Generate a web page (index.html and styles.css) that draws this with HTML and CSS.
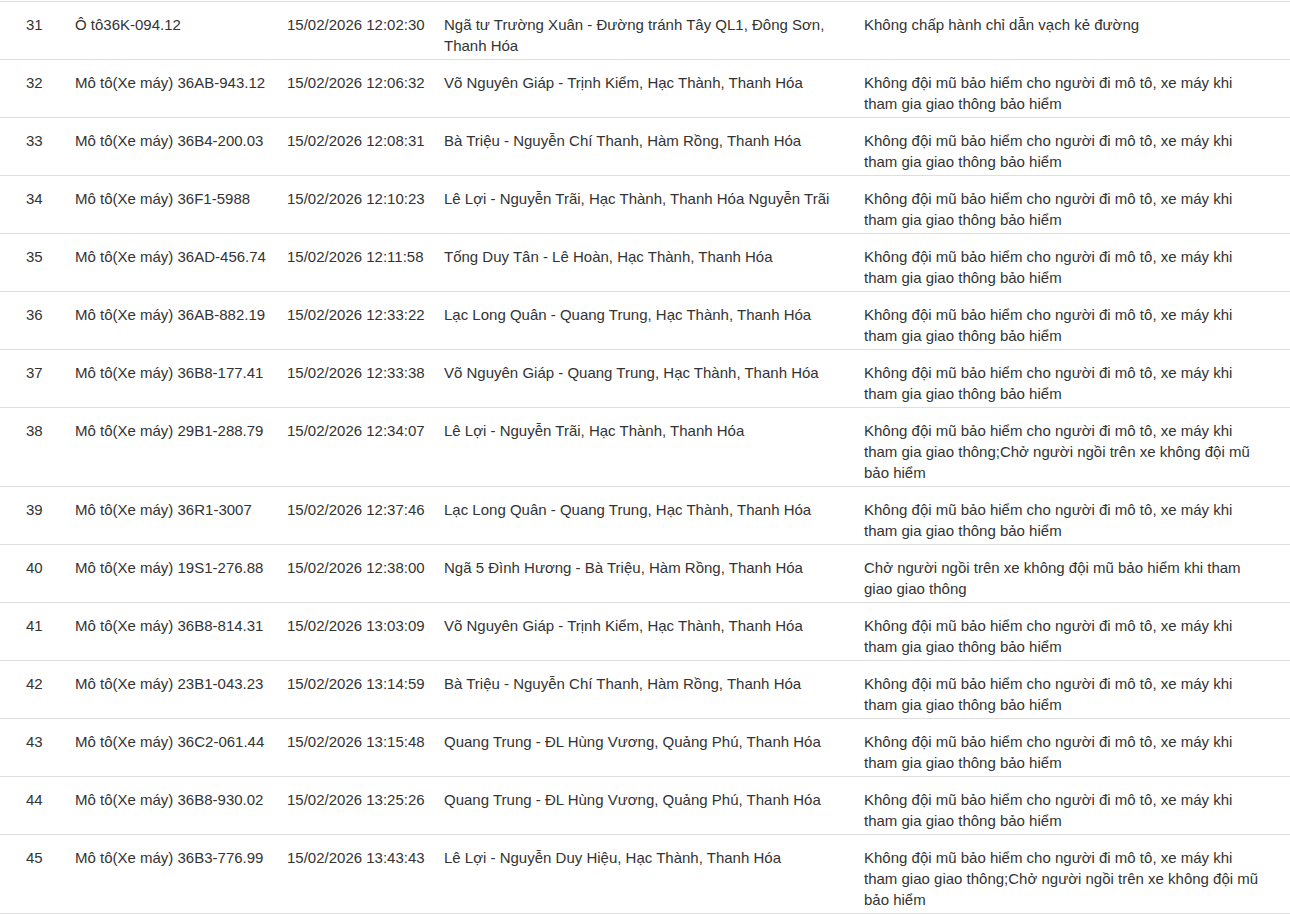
FILE: index.html
```html
<!DOCTYPE html>
<html lang="vi">
<head>
<meta charset="utf-8">
<title>Danh sách vi phạm</title>
<link rel="stylesheet" href="styles.css">
</head>
<body>
<div class="wrap">
<table class="violations">
<colgroup>
<col class="c-no"><col class="c-veh"><col class="c-time"><col class="c-loc"><col class="c-act">
</colgroup>
<tbody>
<tr><td>31</td><td>Ô tô36K-094.12</td><td class="time">15/02/2026 12:02:30</td><td>Ngã tư Trường Xuân - Đường tránh Tây QL1, Đông Sơn, Thanh Hóa</td><td>Không chấp hành chỉ dẫn vạch kẻ đường</td></tr>
<tr><td>32</td><td>Mô tô(Xe máy) 36AB-943.12</td><td class="time">15/02/2026 12:06:32</td><td>Võ Nguyên Giáp - Trịnh Kiểm, Hạc Thành, Thanh Hóa</td><td>Không đội mũ bảo hiểm cho người đi mô tô, xe máy khi tham gia giao thông bảo hiểm</td></tr>
<tr><td>33</td><td>Mô tô(Xe máy) 36B4-200.03</td><td class="time">15/02/2026 12:08:31</td><td>Bà Triệu - Nguyễn Chí Thanh, Hàm Rồng, Thanh Hóa</td><td>Không đội mũ bảo hiểm cho người đi mô tô, xe máy khi tham gia giao thông bảo hiểm</td></tr>
<tr><td>34</td><td>Mô tô(Xe máy) 36F1-5988</td><td class="time">15/02/2026 12:10:23</td><td>Lê Lợi - Nguyễn Trãi, Hạc Thành, Thanh Hóa Nguyễn Trãi</td><td>Không đội mũ bảo hiểm cho người đi mô tô, xe máy khi tham gia giao thông bảo hiểm</td></tr>
<tr><td>35</td><td>Mô tô(Xe máy) 36AD-456.74</td><td class="time">15/02/2026 12:11:58</td><td>Tống Duy Tân - Lê Hoàn, Hạc Thành, Thanh Hóa</td><td>Không đội mũ bảo hiểm cho người đi mô tô, xe máy khi tham gia giao thông bảo hiểm</td></tr>
<tr><td>36</td><td>Mô tô(Xe máy) 36AB-882.19</td><td class="time">15/02/2026 12:33:22</td><td>Lạc Long Quân - Quang Trung, Hạc Thành, Thanh Hóa</td><td>Không đội mũ bảo hiểm cho người đi mô tô, xe máy khi tham gia giao thông bảo hiểm</td></tr>
<tr><td>37</td><td>Mô tô(Xe máy) 36B8-177.41</td><td class="time">15/02/2026 12:33:38</td><td>Võ Nguyên Giáp - Quang Trung, Hạc Thành, Thanh Hóa</td><td>Không đội mũ bảo hiểm cho người đi mô tô, xe máy khi tham gia giao thông bảo hiểm</td></tr>
<tr><td>38</td><td>Mô tô(Xe máy) 29B1-288.79</td><td class="time">15/02/2026 12:34:07</td><td>Lê Lợi - Nguyễn Trãi, Hạc Thành, Thanh Hóa</td><td>Không đội mũ bảo hiểm cho người đi mô tô, xe máy khi tham gia giao thông;Chở người ngồi trên xe không đội mũ bảo hiểm</td></tr>
<tr><td>39</td><td>Mô tô(Xe máy) 36R1-3007</td><td class="time">15/02/2026 12:37:46</td><td>Lạc Long Quân - Quang Trung, Hạc Thành, Thanh Hóa</td><td>Không đội mũ bảo hiểm cho người đi mô tô, xe máy khi tham gia giao thông bảo hiểm</td></tr>
<tr><td>40</td><td>Mô tô(Xe máy) 19S1-276.88</td><td class="time">15/02/2026 12:38:00</td><td>Ngã 5 Đình Hương - Bà Triệu, Hàm Rồng, Thanh Hóa</td><td>Chở người ngồi trên xe không đội mũ bảo hiểm khi tham giao giao thông</td></tr>
<tr><td>41</td><td>Mô tô(Xe máy) 36B8-814.31</td><td class="time">15/02/2026 13:03:09</td><td>Võ Nguyên Giáp - Trịnh Kiểm, Hạc Thành, Thanh Hóa</td><td>Không đội mũ bảo hiểm cho người đi mô tô, xe máy khi tham gia giao thông bảo hiểm</td></tr>
<tr><td>42</td><td>Mô tô(Xe máy) 23B1-043.23</td><td class="time">15/02/2026 13:14:59</td><td>Bà Triệu - Nguyễn Chí Thanh, Hàm Rồng, Thanh Hóa</td><td>Không đội mũ bảo hiểm cho người đi mô tô, xe máy khi tham gia giao thông bảo hiểm</td></tr>
<tr><td>43</td><td>Mô tô(Xe máy) 36C2-061.44</td><td class="time">15/02/2026 13:15:48</td><td>Quang Trung - ĐL Hùng Vương, Quảng Phú, Thanh Hóa</td><td>Không đội mũ bảo hiểm cho người đi mô tô, xe máy khi tham gia giao thông bảo hiểm</td></tr>
<tr><td>44</td><td>Mô tô(Xe máy) 36B8-930.02</td><td class="time">15/02/2026 13:25:26</td><td>Quang Trung - ĐL Hùng Vương, Quảng Phú, Thanh Hóa</td><td>Không đội mũ bảo hiểm cho người đi mô tô, xe máy khi tham gia giao thông bảo hiểm</td></tr>
<tr><td>45</td><td>Mô tô(Xe máy) 36B3-776.99</td><td class="time">15/02/2026 13:43:43</td><td>Lê Lợi - Nguyễn Duy Hiệu, Hạc Thành, Thanh Hóa</td><td>Không đội mũ bảo hiểm cho người đi mô tô, xe máy khi tham giao giao thông;Chở người ngồi trên xe không đội mũ bảo hiểm</td></tr>
</tbody>
</table>
</div>
</body>
</html>
```

FILE: styles.css
```css
html, body {
  margin: 0;
  padding: 0;
  background: #ffffff;
}

.wrap {
  padding-top: 1px;
}

.violations {
  width: 1290px;
  border-collapse: collapse;
  table-layout: fixed;
  font-family: "Liberation Sans", Arial, sans-serif;
  font-size: 15px;
  line-height: 21px;
  color: #333333;
}

.c-no { width: 65px; }
.c-veh { width: 212px; }
.c-time { width: 157px; }
.c-loc { width: 420px; }
.c-act { width: 436px; }

.violations tr {
  border-top: 1px solid #dedede;
  border-bottom: 1px solid #dedede;
}

.violations td {
  vertical-align: top;
  padding: 12px 4px 3px 10px;
  text-align: left;
}

.violations td.time {
  white-space: nowrap;
}

.violations td:first-child {
  padding-left: 26px;
}

.violations td:last-child {
  padding-right: 26px;
}
```
